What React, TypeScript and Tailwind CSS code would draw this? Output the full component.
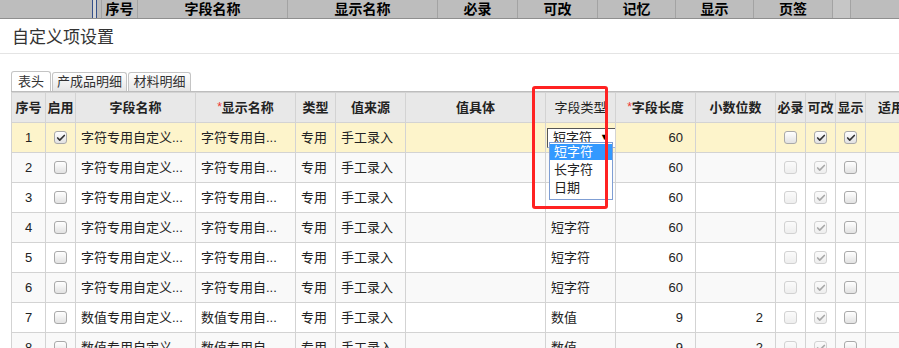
import { Check } from 'lucide-react'

const font = { fontFamily: '"Liberation Sans", "Noto Sans CJK SC", sans-serif' }

const topCols = [
  { label: '序号', w: 'w-[36px]' },
  { label: '字段名称', w: 'w-[150px]' },
  { label: '显示名称', w: 'w-[150px]' },
  { label: '必录', w: 'w-[80px]' },
  { label: '可改', w: 'w-[80px]' },
  { label: '记忆', w: 'w-[78px]' },
  { label: '显示', w: 'w-[78px]' },
  { label: '页签', w: 'w-[79px]' },
]

const colWidths = [34, 30, 120, 100, 40, 70, 140, 70, 80, 80, 30, 30, 30, 100]

type Row = {
  no: number
  enabled: boolean
  name: string
  display: string
  type: string
  length: string
  decimals: string
}

const rows: Row[] = [
  { no: 1, enabled: true, name: '字符专用自定义...', display: '字符专用自...', type: '', length: '60', decimals: '' },
  { no: 2, enabled: false, name: '字符专用自定义...', display: '字符专用自...', type: '', length: '60', decimals: '' },
  { no: 3, enabled: false, name: '字符专用自定义...', display: '字符专用自...', type: '', length: '60', decimals: '' },
  { no: 4, enabled: false, name: '字符专用自定义...', display: '字符专用自...', type: '短字符', length: '60', decimals: '' },
  { no: 5, enabled: false, name: '字符专用自定义...', display: '字符专用自...', type: '短字符', length: '60', decimals: '' },
  { no: 6, enabled: false, name: '字符专用自定义...', display: '字符专用自...', type: '短字符', length: '60', decimals: '' },
  { no: 7, enabled: false, name: '数值专用自定义...', display: '数值专用自...', type: '数值', length: '9', decimals: '2' },
  { no: 8, enabled: false, name: '数值专用自定义...', display: '数值专用自...', type: '数值', length: '9', decimals: '2' },
]

function Box({ checked, disabled }: { checked?: boolean; disabled?: boolean }) {
  return (
    <div
      className={
        'mx-auto h-[13px] w-[13px] rounded-[3px] border flex items-center justify-center ' +
        (disabled
          ? 'border-[#d2d2d2] bg-gradient-to-b from-[#fbfbfb] to-[#eeeeee]'
          : 'border-[#a9a9a9] bg-gradient-to-b from-white to-[#e2e2e2]')
      }
    >
      {checked && (
        <Check
          strokeWidth={4}
          className={'h-[10px] w-[10px] ' + (disabled ? 'text-[#a8a8a8]' : 'text-[#333]')}
        />
      )}
    </div>
  )
}

const th = 'border border-[#d3d3d3] font-bold text-[13px] text-[#222] px-0 h-[30px]'
const td = 'border border-[#d3d3d3] text-[13px] text-[#222] h-[30px] whitespace-nowrap overflow-hidden'

export default function App() {
  return (
    <div className="relative w-[899px] h-[348px] overflow-hidden bg-white" style={font}>
      {/* grid header strip behind the dialog */}
      <div className="flex h-[19px] bg-[#bdbdbd] border-b border-[#8f8f8f]">
        <div className="w-[92px] flex-shrink-0" />
        <div className="w-[1px] bg-[#34508a] flex-shrink-0" />
        <div className="w-[3px] bg-[#d4d4d4] flex-shrink-0" />
        <div className="w-[1px] bg-[#34508a] flex-shrink-0" />
        <div className="w-[4px] flex-shrink-0" />
        {topCols.map((c) => (
          <div
            key={c.label}
            className={`${c.w} flex-shrink-0 border-l border-[#a3a3a3] flex items-center justify-center text-[14px] font-bold text-black`}
          >
            {c.label}
          </div>
        ))}
        <div className="w-[18px] flex-shrink-0 border-l border-[#a3a3a3] bg-[#c6c6c6]" />
        <div className="flex-1 border-l border-[#a3a3a3]" />
      </div>

      {/* title */}
      <div className="h-[35px] border-b border-[#e4e4e4] pl-[12px] flex items-center">
        <span className="text-[17px] text-[#333] leading-none pt-[2px]">自定义项设置</span>
      </div>

      {/* tabs */}
      <div className="flex items-end gap-[1px] pl-[11px] h-[37px]">
        <div className="h-[20px] w-[40px] border border-b-0 border-[#c4c4c4] rounded-t-[3px] bg-white text-[13px] text-[#333] flex items-center justify-center">
          表头
        </div>
        <div className="h-[19px] w-[75px] border border-b-0 border-[#c4c4c4] rounded-t-[3px] bg-gradient-to-b from-white to-[#e6e6e6] text-[13px] text-[#333] flex items-center justify-center">
          产成品明细
        </div>
        <div className="h-[19px] w-[63px] border border-b-0 border-[#c4c4c4] rounded-t-[3px] bg-gradient-to-b from-white to-[#e6e6e6] text-[13px] text-[#333] flex items-center justify-center">
          材料明细
        </div>
      </div>

      {/* table */}
      <div className="ml-[11px] border-t border-[#bdbdbd]">
        <table className="table-fixed border-collapse w-[954px]">
          <colgroup>
            {colWidths.map((w, i) => (
              <col key={i} style={{ width: w }} />
            ))}
          </colgroup>
          <thead>
            <tr className="bg-[#e8e8e8]">
              <th className={th}>序号</th>
              <th className={th}>启用</th>
              <th className={th}>字段名称</th>
              <th className={th}>
                <span className="text-[#e33] font-normal text-[12px] align-top">*</span>显示名称
              </th>
              <th className={th}>类型</th>
              <th className={th}>值来源</th>
              <th className={th}>值具体</th>
              <th className={th + ' !font-normal'}>字段类型</th>
              <th className={th}>
                <span className="text-[#e33] font-normal text-[12px] align-top">*</span>字段长度
              </th>
              <th className={th}>小数位数</th>
              <th className={th}>必录</th>
              <th className={th}>可改</th>
              <th className={th}>显示</th>
              <th className={th + ' text-left pl-[12px]'}>适用</th>
            </tr>
          </thead>
          <tbody>
            {rows.map((r) => {
              const first = r.no === 1
              const bg = first ? 'bg-[#fdf4cb]' : r.no % 2 === 0 ? 'bg-[#f9f9f9]' : 'bg-white'
              return (
                <tr key={r.no} className={bg}>
                  <td className={td + ' text-center'}>{r.no}</td>
                  <td className={td}>
                    <Box checked={r.enabled} />
                  </td>
                  <td className={td + ' pl-[5px]'}>{r.name}</td>
                  <td className={td + ' pl-[5px]'}>{r.display}</td>
                  <td className={td + ' pl-[5px]'}>专用</td>
                  <td className={td + ' pl-[5px]'}>手工录入</td>
                  <td className={td} />
                  <td className={td + ' pl-[5px]'}>
                    {first ? (
                      <div className="-ml-[4px] h-[20px] w-[69px] border border-[#555] border-b-[#9bb6e0] bg-white flex items-center justify-between pl-[5px] pr-[6px]">
                        <span className="w-[39px] overflow-hidden whitespace-nowrap">短字符</span>
                        <span className="text-[9px] text-black">▼</span>
                      </div>
                    ) : (
                      r.type
                    )}
                  </td>
                  <td className={td + ' text-right pr-[12px]'}>{r.length}</td>
                  <td className={td + ' text-right pr-[12px]'}>{r.decimals}</td>
                  <td className={td}>
                    <Box disabled={!first} />
                  </td>
                  <td className={td}>
                    <Box checked disabled={!first} />
                  </td>
                  <td className={td}>
                    <Box checked={first} />
                  </td>
                  <td className={td} />
                </tr>
              )
            })}
          </tbody>
        </table>
      </div>

      {/* open dropdown list */}
      <div className="absolute left-[549px] top-[142px] w-[64px] h-[58px] border border-[#7f9ed4] bg-white text-[13px] text-[#222] leading-[16px] py-[1px]">
        <div className="bg-[#3399ff] text-white pl-[4px] h-[16px]">短字符</div>
        <div className="pl-[4px] h-[19px] leading-[19px]">长字符</div>
        <div className="pl-[4px] h-[18px] leading-[18px]">日期</div>
      </div>

      {/* red annotation */}
      <div className="absolute left-[532px] top-[86px] w-[76px] h-[123px] border-[3px] border-[#ff2222] rounded-[3px]" />
    </div>
  )
}
